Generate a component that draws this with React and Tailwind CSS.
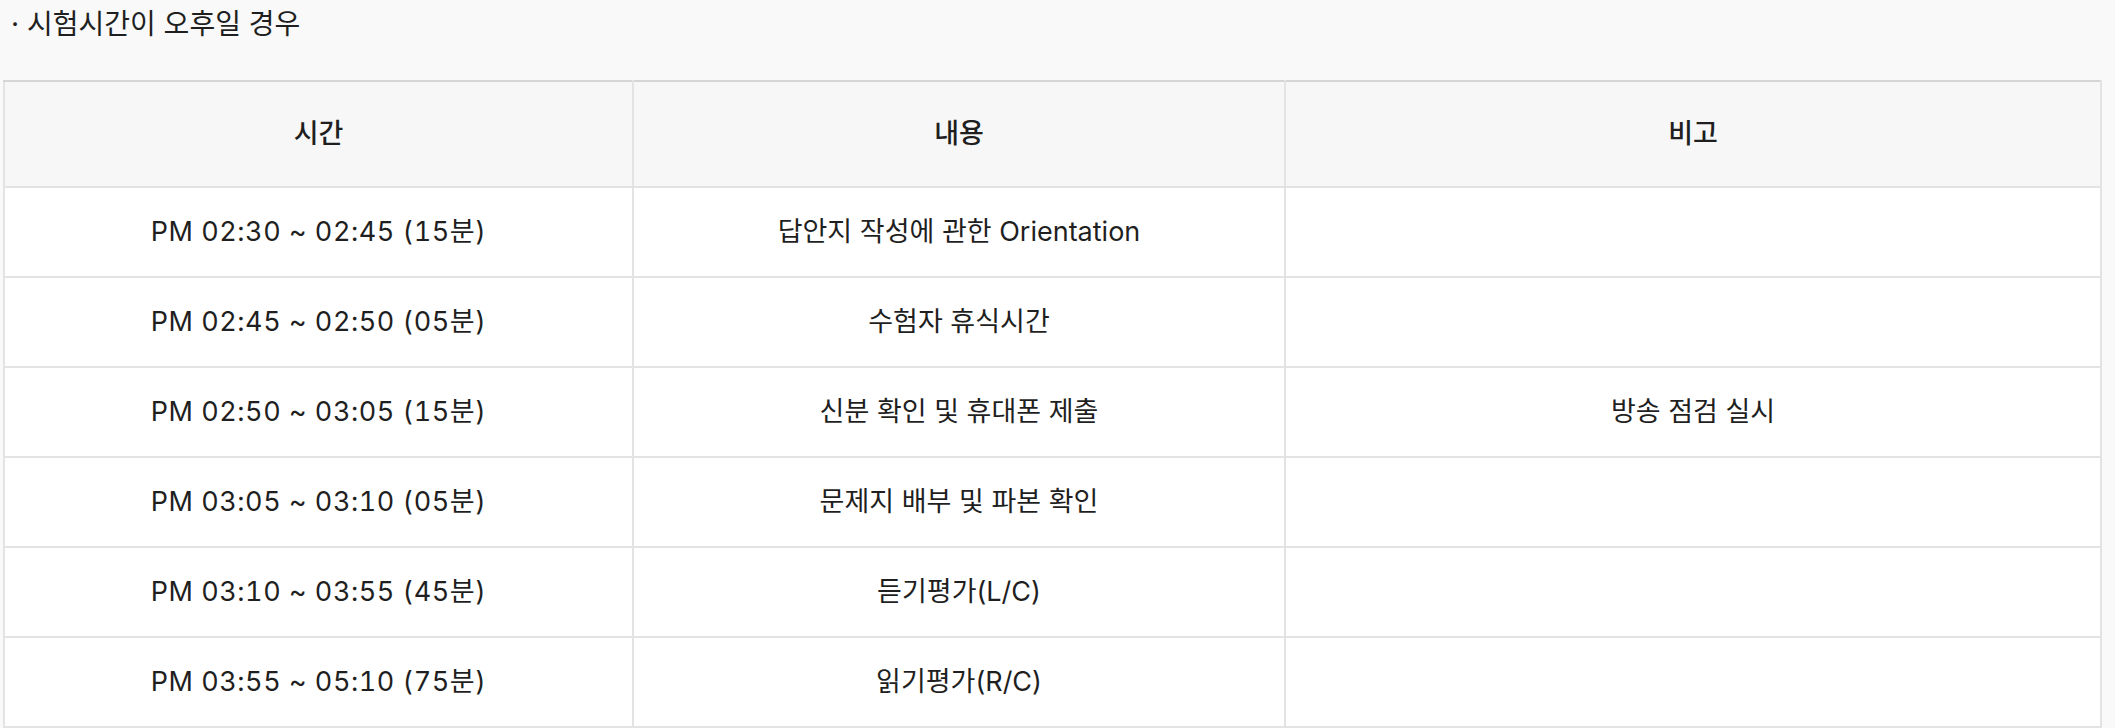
import React from 'react';

const rows = [
  { time: 'PM 02:30 ~ 02:45 (15분)', content: '답안지 작성에 관한 Orientation', note: '' },
  { time: 'PM 02:45 ~ 02:50 (05분)', content: '수험자 휴식시간', note: '' },
  { time: 'PM 02:50 ~ 03:05 (15분)', content: '신분 확인 및 휴대폰 제출', note: '방송 점검 실시' },
  { time: 'PM 03:05 ~ 03:10 (05분)', content: '문제지 배부 및 파본 확인', note: '' },
  { time: 'PM 03:10 ~ 03:55 (45분)', content: '듣기평가(L/C)', note: '' },
  { time: 'PM 03:55 ~ 05:10 (75분)', content: '읽기평가(R/C)', note: '' },
];

function App() {
  return (
    <div className="min-h-screen w-[2115px] bg-[#f9f9f9] text-[#1f1f1f] font-['Inter','Noto_Sans_CJK_KR',sans-serif]">
      <p className="h-[80px] pl-[11px] pt-[5px] text-[28px] leading-[38px]">· 시험시간이 오후일 경우</p>
      <div className="pl-[3px]">
        <table className="w-[2099px] table-fixed border-collapse text-[27px]">
          <colgroup>
            <col className="w-[629px]" />
            <col className="w-[652px]" />
            <col />
          </colgroup>
          <thead>
            <tr className="h-[106px] bg-[#f7f7f7] border-t-2 border-t-[#d5d5d5]">
              <th className="border-2 border-t-[#d5d5d5] border-[#e3e3e3] font-medium">시간</th>
              <th className="border-2 border-t-[#d5d5d5] border-[#e3e3e3] font-medium">내용</th>
              <th className="border-2 border-t-[#d5d5d5] border-[#e3e3e3] font-medium">비고</th>
            </tr>
          </thead>
          <tbody className="bg-white">
            {rows.map((r, i) => (
              <tr key={i} className="h-[90px]">
                <td className="border-2 border-[#e3e3e3] text-center tabular-nums tracking-[0.02em]">{r.time}</td>
                <td className="border-2 border-[#e3e3e3] text-center">{r.content}</td>
                <td className="border-2 border-[#e3e3e3] text-center">{r.note}</td>
              </tr>
            ))}
          </tbody>
        </table>
      </div>
    </div>
  );
}

export default App;
